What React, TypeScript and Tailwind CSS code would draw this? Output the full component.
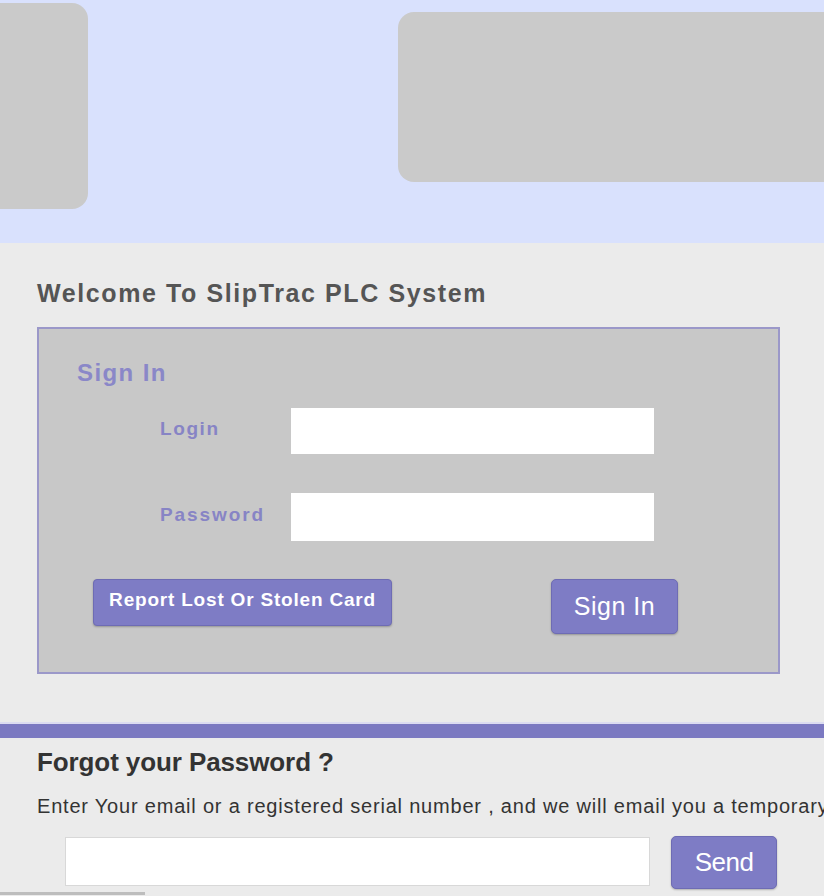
import React from 'react';

const font = { fontFamily: '"Liberation Sans", Arial, sans-serif' };

export default function App() {
  return (
    <div className="w-[824px] h-[896px] overflow-hidden bg-[#ebebeb] flex flex-col" style={font}>
      {/* header */}
      <div className="h-[243px] shrink-0 bg-[#d9e1fd] flex items-start overflow-hidden">
        <div className="ml-[-20px] mt-[3px] w-[108px] h-[206px] shrink-0 rounded-[16px] bg-[#cacaca]" />
        <div className="ml-[310px] mt-[12px] w-[460px] h-[170px] shrink-0 rounded-[16px] bg-[#cacaca]" />
      </div>

      {/* sign in */}
      <div className="pt-[36px] pl-[37px]">
        <h1 className="text-[25px] leading-[28px] font-bold text-[#555555] tracking-[1.6px]">
          Welcome To SlipTrac PLC System
        </h1>
        <div className="mt-[20px] w-[743px] h-[347px] border-2 border-[#9b98c9] bg-[#c8c8c8] pt-[32px]">
          <h2 className="ml-[38px] text-[24px] leading-[24px] font-bold text-[#8a87c8] tracking-[1.4px]">Sign In</h2>
          <div className="mt-[23px] flex flex-col gap-[39px]">
            <div className="flex items-center">
              <label className="ml-[121px] w-[131px] text-[19px] font-bold text-[#8784c5] tracking-[1.6px] pb-[3px]">Login</label>
              <input className="w-[363px] h-[46px] bg-white outline-none" />
            </div>
            <div className="flex items-center">
              <label className="ml-[121px] w-[131px] text-[19px] font-bold text-[#8784c5] tracking-[1.9px] pb-[3px]">Password</label>
              <input type="password" className="w-[363px] h-[48px] bg-white outline-none" />
            </div>
          </div>
          <div className="mt-[38px] flex items-start">
            <button className="ml-[54px] w-[299px] h-[47px] rounded-[4px] bg-[#7e7cc5] border border-[#6e6cb4] shadow-[0_1px_2px_rgba(0,0,0,0.25)] text-white text-[19px] font-bold tracking-[0.8px] pb-[4px]">
              Report Lost Or Stolen Card
            </button>
            <button className="ml-[159px] w-[127px] h-[55px] rounded-[5px] bg-[#7e7cc5] border border-[#6e6cb4] shadow-[0_1px_2px_rgba(0,0,0,0.25)] text-white text-[25px] tracking-[0.5px]">
              Sign In
            </button>
          </div>
        </div>
      </div>

      {/* forgot password */}
      <div className="mt-[48px] border-t-2 border-[#dcdcf1]">
        <div className="h-[14px] bg-[#7b79c1]" />
        <div className="pl-[37px] pt-[10px]">
          <h3 className="text-[26px] leading-[28px] font-bold text-[#333333] tracking-[-0.1px]">Forgot your Password ?</h3>
          <div className="mt-[18px] overflow-hidden">
            <p className="text-[20px] leading-[24px] text-[#333333] whitespace-nowrap tracking-[0.8px]">
              Enter Your email or a registered serial number , and we will email you a temporary password.
            </p>
          </div>
          <div className="mt-[18px] flex items-start">
            <input className="ml-[28px] mt-[1px] w-[585px] h-[49px] bg-white border border-[#d8d8d8] outline-none" />
            <button className="ml-[21px] w-[106px] h-[53px] rounded-[5px] bg-[#7e7cc5] border border-[#6e6cb4] shadow-[0_1px_2px_rgba(0,0,0,0.25)] text-white text-[26px] tracking-[-0.5px]">
              Send
            </button>
          </div>
        </div>
        <div className="mt-[3px] w-[145px] h-[3px] bg-[#bdbdbd]" />
      </div>
    </div>
  );
}
